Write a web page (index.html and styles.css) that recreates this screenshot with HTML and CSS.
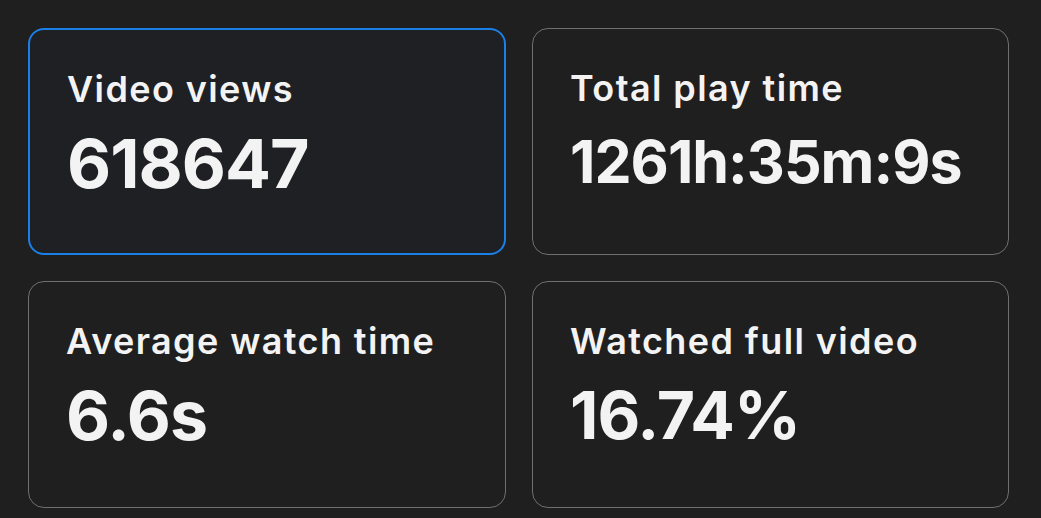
FILE: index.html
```html
<!DOCTYPE html>
<html lang="en">
<head>
  <meta charset="UTF-8" />
  <meta name="viewport" content="width=device-width, initial-scale=1.0"/>
  <title>Video stats</title>
  <link rel="stylesheet" href="styles.css">
</head>
<body>
  <main class="stats">
    <div class="card active">
      <div class="label">Video views</div>
      <div class="value">618647</div>
    </div>
    <div class="card">
      <div class="label">Total play time</div>
      <div class="value small">1261h:35m:9s</div>
    </div>
    <div class="card">
      <div class="label">Average watch time</div>
      <div class="value">6.6s</div>
    </div>
    <div class="card">
      <div class="label">Watched full video</div>
      <div class="value medium">16.74%</div>
    </div>
  </main>
</body>
</html>
```

FILE: styles.css
```css
:root {
  --bg: #1f1f1f;
  --fg: #f3f3f3;
  --border: #6f6f6f;
  --primary: #1a7fe6;
}

* {
  box-sizing: border-box;
}

body {
  margin: 0;
  font-family: Inter, 'Noto Sans', sans-serif;
  background: var(--bg);
  color: var(--fg);
}

.stats {
  display: grid;
  grid-template-columns: 478px 477px;
  gap: 26px 26px;
  padding: 28px 0 0 28px;
}

.card {
  height: 227px;
  border: 1.5px solid var(--border);
  border-radius: 16px;
  padding: 38px 37px;
}

.card.active {
  border: 2px solid var(--primary);
  background: #1e2024;
}

.label {
  font-size: 36px;
  font-weight: 600;
  letter-spacing: 1.4px;
  line-height: 1.2;
}

.value {
  height: 86px;
  margin-top: 9px;
  font-size: 68px;
  font-weight: 700;
  letter-spacing: -1px;
  line-height: 86px;
  font-variant-numeric: proportional-nums;
}

.value.medium {
  font-size: 66px;
}

.value.small {
  font-size: 59px;
}
```
